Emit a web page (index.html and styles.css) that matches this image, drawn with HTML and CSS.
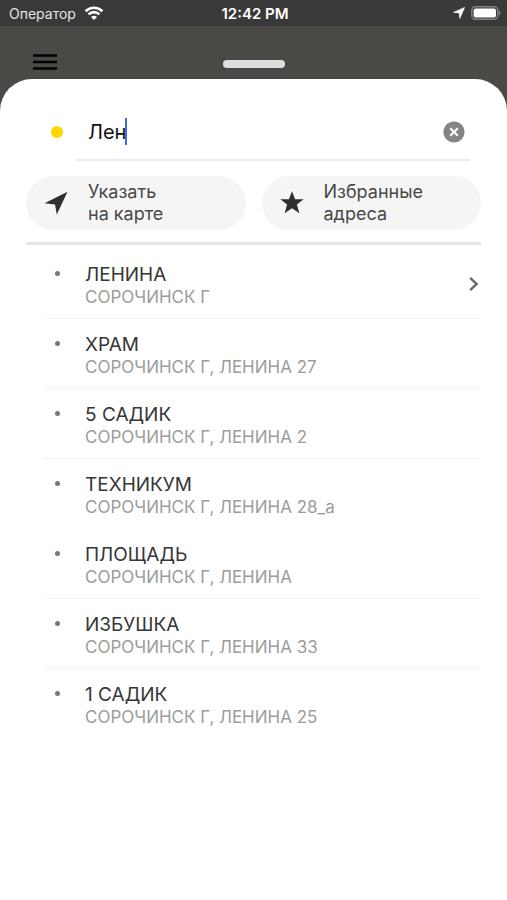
FILE: index.html
```html
<!DOCTYPE html>
<html lang="ru">
<head>
  <meta charset="utf-8">
  <meta name="viewport" content="width=device-width, initial-scale=1">
  <title>Поиск адреса</title>
  <link rel="stylesheet" href="styles.css">
</head>
<body>
  <div class="status-bar">
    <div class="status-left">
      <span>Оператор</span>
      <svg width="20" height="16" viewBox="0 0 20 16" fill="none" stroke="#fff" stroke-width="2.6">
        <path d="M1.6 6.2a12 12 0 0 1 16.8 0"/>
        <path d="M4.6 9.4a7.6 7.6 0 0 1 10.8 0"/>
        <path d="M10 15l-3-3.1a4.2 4.2 0 0 1 6 0z" fill="#fff" stroke="none"/>
      </svg>
    </div>
    <span class="status-time">12:42 PM</span>
    <div class="status-right">
      <svg width="12" height="12" viewBox="0 0 12 12" fill="#fff"><path d="M11.6.4L6.8 11.6 6.2 6 .4 5.4z" stroke="#fff" stroke-width=".6" stroke-linejoin="round"/></svg>
      <svg width="30" height="14" viewBox="0 0 30 14">
        <rect x=".8" y=".8" width="26" height="12.4" rx="3.6" fill="none" stroke="#828282" stroke-width="1.4"/>
        <rect x="2.6" y="2.6" width="22.4" height="8.8" rx="2" fill="#fff"/>
        <path d="M28 4.6c2 .8 2 4 0 4.8z" fill="#828282"/>
      </svg>
    </div>
  </div>

  <header class="top">
    <button class="menu-button" aria-label="Меню">
      <svg width="24" height="18" viewBox="0 0 24 18" stroke="#000" stroke-width="2.4">
        <path d="M0 2.5h24M0 9h24M0 15.5h24"/>
      </svg>
    </button>
    <div class="handle"></div>
  </header>

  <main class="sheet">
    <form class="search">
      <span class="point"></span>
      <div class="search-field">
        <input type="text" id="address" value="Лен" aria-label="Адрес" autocomplete="off">
        <span class="caret"></span>
        <button type="button" class="clear-button" aria-label="Очистить">
          <svg width="22" height="22" viewBox="0 0 22 22">
            <circle cx="11" cy="11" r="10.6" fill="#858585"/>
            <path d="M7.2 7.2l7.6 7.6M14.8 7.2l-7.6 7.6" stroke="#fff" stroke-width="2"/>
          </svg>
        </button>
      </div>
    </form>

    <div class="actions">
      <button class="action">
        <svg width="24" height="24" viewBox="0 0 24 24" fill="#303030"><path d="M23.5.8L12.8 23.6 11 13.6.6 12.2z"/></svg>
        <span>Указать<br>на карте</span>
      </button>
      <button class="action">
        <svg width="24" height="24" viewBox="0 0 24 24" fill="#303030"><path d="M12 .3l3.1 8h8.5l-6.7 5.2 2.4 8.7-7.3-5-7.3 5 2.4-8.7L.4 8.3h8.500z"/></svg>
        <span>Избранные<br>адреса</span>
      </button>
    </div>

    <ul class="results">
      <li><a href="#"><span class="dot"></span><span class="place"><b>ЛЕНИНА</b><small>СОРОЧИНСК Г</small></span>
        <svg width="10" height="16" viewBox="0 0 10 16" fill="none" stroke="#686868" stroke-width="2.4"><path d="M1.2 1.8L7.6 8l-6.400 6.200"/></svg></a></li>
      <li><a href="#"><span class="dot"></span><span class="place"><b>ХРАМ</b><small>СОРОЧИНСК Г, ЛЕНИНА 27</small></span></a></li>
      <li><a href="#"><span class="dot"></span><span class="place"><b>5 САДИК</b><small>СОРОЧИНСК Г, ЛЕНИНА 2</small></span></a></li>
      <li class="faint"><a href="#"><span class="dot"></span><span class="place"><b>ТЕХНИКУМ</b><small>СОРОЧИНСК Г, ЛЕНИНА 28_а</small></span></a></li>
      <li><a href="#"><span class="dot"></span><span class="place"><b>ПЛОЩАДЬ</b><small>СОРОЧИНСК Г, ЛЕНИНА</small></span></a></li>
      <li><a href="#"><span class="dot"></span><span class="place"><b>ИЗБУШКА</b><small>СОРОЧИНСК Г, ЛЕНИНА 33</small></span></a></li>
      <li><a href="#"><span class="dot"></span><span class="place"><b>1 САДИК</b><small>СОРОЧИНСК Г, ЛЕНИНА 25</small></span></a></li>
    </ul>
  </main>
</body>
</html>
```
FILE: styles.css
```css
:root {
  --status-bg: #393939;
  --page-bg: #4a4946;
  --text-color: #363636;
  --muted-color: #9c9c9c;
  --button-bg: #f5f5f5;
  --line-color: #e4e4e4;
}

* {
  box-sizing: border-box;
}

body {
  margin: 0;
  min-height: 100vh;
  display: flex;
  flex-direction: column;
  font-family: Inter, Roboto, sans-serif;
  background: var(--page-bg);
  color: var(--text-color);
}

button {
  padding: 0;
  border: none;
  background: none;
  font: inherit;
  color: inherit;
  cursor: pointer;
}

svg {
  display: block;
  flex: none;
}

/* Status bar */
.status-bar {
  display: grid;
  grid-template-columns: 1fr auto 1fr;
  align-items: center;
  height: 26px;
  padding: 0 6px 0 9px;
  background: var(--status-bg);
  color: #fff;
  font-size: 15px;
}

.status-left,
.status-right {
  display: flex;
  align-items: center;
}

.status-left {
  gap: 8px;
  color: #e4e4e4;
  font-size: 14px;
}

.status-right {
  gap: 6px;
  justify-content: flex-end;
}

.status-time {
  font-weight: 600;
}

/* Header */
.top {
  display: grid;
  grid-template-columns: 1fr auto 1fr;
  align-items: center;
  height: 53px;
  padding: 18px 33px 0;
}

.menu-button {
  justify-self: start;
}

.handle {
  width: 62px;
  height: 8px;
  margin-top: 5px;
  border-radius: 4px;
  background: #dedede;
}

/* Sheet */
.sheet {
  flex: 1;
  padding: 16px 26px;
  border-radius: 32px 32px 0 0;
  background: #fff;
}

.search {
  display: flex;
  align-items: center;
  padding: 0 11px 0 25px;
}

.point {
  width: 12px;
  height: 12px;
  margin-top: 8px;
  border-radius: 50%;
  background: #ffd600;
}

.search-field {
  position: relative;
  flex: 1;
  display: flex;
  align-items: center;
  height: 66px;
  margin-left: 13px;
  padding: 10px 5px 0 12px;
  border-bottom: 2px solid #ebebeb;
}

.search-field input {
  flex: 1;
  min-width: 0;
  padding: 0;
  border: none;
  outline: none;
  background: none;
  font: inherit;
  font-size: 20px;
  color: #111;
}

.caret {
  position: absolute;
  top: 23px;
  left: 49px;
  width: 2px;
  height: 27px;
  background: #4468e0;
}

.actions {
  display: grid;
  grid-template-columns: 1fr 1fr;
  gap: 16px;
  padding: 15px 0 12px;
  border-bottom: 3px solid var(--line-color);
}

.action {
  display: flex;
  align-items: center;
  gap: 20px;
  height: 54px;
  padding: 0 18px;
  border-radius: 27px;
  background: var(--button-bg);
  font-size: 18px;
  line-height: 22px;
  text-align: left;
  color: #484848;
}

/* Results */
.results {
  list-style: none;
  margin: 0;
  padding: 4px 0 0 18px;
}

.results li {
  border-bottom: 1px solid #f2f2f2;
}

.results li.faint {
  border-color: #fcfcfc;
}

.results li:last-child {
  border: none;
}

.results a {
  display: flex;
  align-items: center;
  height: 69px;
  padding: 0 2px 0 11px;
  color: inherit;
  text-decoration: none;
}

.dot {
  width: 5px;
  height: 5px;
  margin: 0 25px 20px 0;
  border-radius: 50%;
  background: #777;
}

.place {
  flex: 1;
  padding-top: 4px;
}

.place b,
.place small {
  display: block;
  font-weight: 400;
  line-height: 23px;
}

.place b {
  font-size: 19px;
}

.place small {
  font-size: 17px;
  color: var(--muted-color);
}
```
